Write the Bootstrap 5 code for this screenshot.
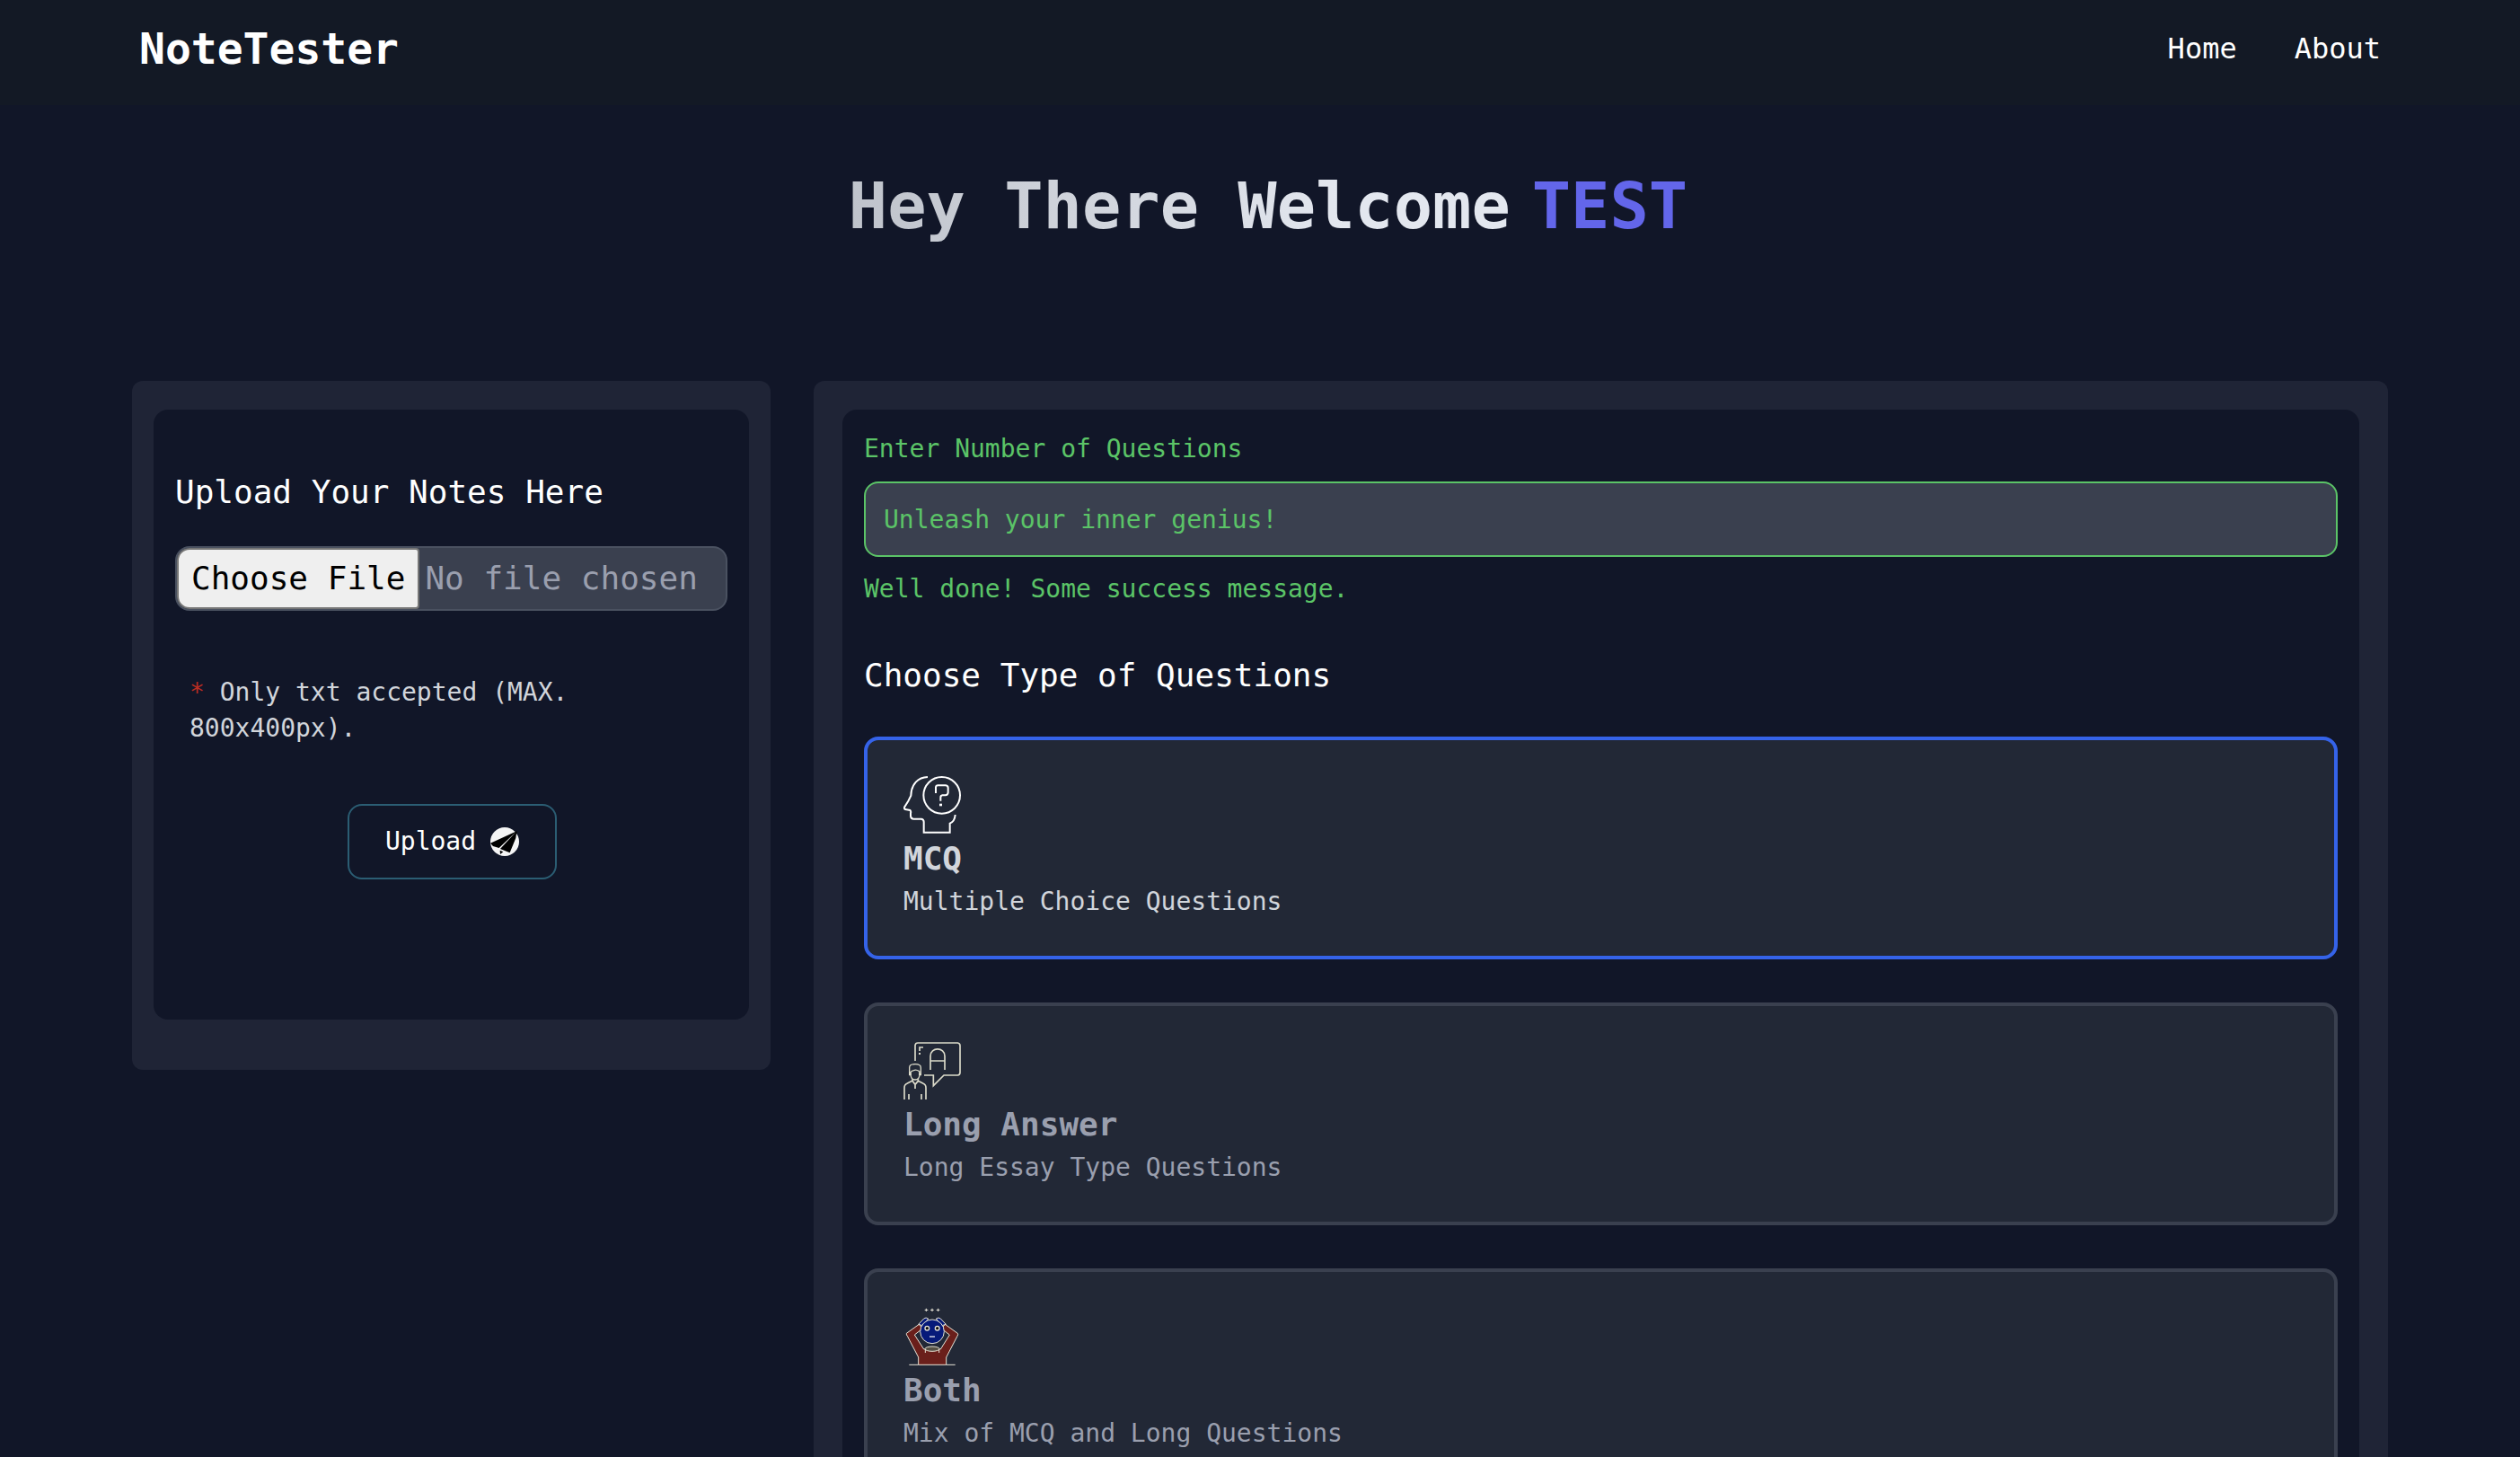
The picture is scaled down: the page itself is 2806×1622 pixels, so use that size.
<!DOCTYPE html>
<html lang="en">
<head>
<meta charset="utf-8">
<meta name="viewport" content="width=device-width, initial-scale=1">
<title>NoteTester</title>
<link rel="stylesheet" href="https://cdn.jsdelivr.net/npm/bootstrap@5.3.0/dist/css/bootstrap.min.css">
<style>
  body { background: #111628; color: #fff; font-family: "DejaVu Sans Mono", "Liberation Mono", monospace; font-size: 28px; line-height: 40px; scrollbar-width: none; }
  .site-header { background: #131925; min-height: 117px; }
  .shell { max-width: 2560px; padding: 0 24px; }
  .site-header .shell { padding: 22px 32px 0; }
  .site-header .navbar-brand { font-size: 48px; line-height: 64px; padding: 0; margin: 0; color: #fff; }
  .site-header .navbar-nav { gap: 64px; }
  .site-header .nav-link { font-size: 32px; line-height: 64px; padding: 0; color: #fff; }
  .hero { padding: 72px 0 155px 18px; }
  .hero h1 { font-size: 72px; line-height: 80px; gap: 24px; }
  .greet { background: linear-gradient(90deg, #bfc3cb, #e3e7ef 75%); -webkit-background-clip: text; background-clip: text; color: transparent; }
  .who { color: #6366ea; }
  .columns { gap: 48px; }
  .side-col { flex: 0 1 711px; }
  .panel { background: #1f2436; border-radius: 12px; }
  .side-col.panel { padding: 32px 24px 56px; }
  .main-col.panel { padding: 32px; }
  .well-box { background: #111628; border-radius: 16px; padding: 24px; }
  .side-col .well-box { padding: 64px 24px 156px; }
  .big-label { display: block; font-size: 36px; line-height: 56px; font-weight: 400; margin: 0; }
  .side-col .big-label { margin-bottom: 32px; }
  .file-field { height: 72px; padding: 0; border: 2px solid #4a5160; border-radius: 16px; background: #3a404f; color: #9a9fae; font-size: 36px; line-height: 42px; overflow: hidden; }
  .file-field:hover, .file-field:focus { background: #3a404f; color: #9a9fae; }
  .file-field::file-selector-button { height: 68px; margin: 0 6px 0 0; padding: 0 14px; border: 2px solid #767676; border-radius: 14px 4px 4px 14px; background: #efefef; color: #000; }
  .file-field:hover:not(:disabled):not([readonly])::file-selector-button { background: #e5e5e5; }
  .file-note { margin: 71px 16px 64px; color: #d1d5db; }
  .star { color: #bb2d22; }
  .upload-row { padding-left: 2px; }
  .upload-btn { border: 2px solid #2b5d73; border-radius: 16px; padding: 20px 40px; color: #fff; font-size: 28px; line-height: 40px; gap: 16px; }
  .upload-btn svg { width: 32px; height: 32px; }
  .ok-text { color: #5bc467; }
  .count-label { display: block; margin-bottom: 16px; }
  .count-field { height: 84px; padding: 0 20px; border: 2px solid #5bc467; border-radius: 16px; background: #3a404f; color: #5bc467; font-size: 28px; line-height: 40px; }
  .count-field:focus { background: #3a404f; color: #5bc467; }
  .count-field::placeholder { color: #5bc467; opacity: 1; }
  .ok-note { margin: 16px 0 48px; }
  .main-col .big-label { margin-bottom: 40px; }
  .choices { gap: 48px; }
  .choice { display: block; border: 4px solid #3a404f; border-radius: 16px; background: #222836; padding: 40px; color: #9a9fae; cursor: pointer; }
  .btn-check:checked + .choice { border-color: #3563e9; color: #d1d5db; }
  .choice svg { display: block; width: 64px; height: 64px; }
  .choice-title { display: block; font-size: 36px; line-height: 56px; font-weight: 700; }
  .choice-text { display: block; }
</style>
</head>
<body>
<header class="site-header">
  <nav class="shell mx-auto d-flex justify-content-between align-items-start" aria-label="Main">
    <a class="navbar-brand fw-bold" href="#">NoteTester</a>
    <div class="navbar-nav flex-row">
      <a class="nav-link" href="#">Home</a>
      <a class="nav-link" href="#">About</a>
    </div>
  </nav>
</header>

<main class="shell mx-auto">
  <div class="hero">
    <h1 class="d-flex flex-wrap justify-content-center fw-bold m-0"><span class="greet">Hey There Welcome</span><span class="who">TEST</span></h1>
  </div>

  <div class="columns d-flex flex-column flex-lg-row align-items-lg-start">
    <section class="side-col panel">
      <form class="well-box">
        <label class="big-label" for="notes">Upload Your Notes Here</label>
        <input class="form-control file-field" type="file" id="notes">
        <p class="file-note"><span class="star">*</span> Only txt accepted (MAX. 800x400px).</p>
        <div class="upload-row d-flex justify-content-center">
          <button type="button" class="upload-btn btn d-inline-flex align-items-center">Upload
            <svg viewBox="78 96 96 96" aria-hidden="true">
              <circle cx="126" cy="144" r="48" fill="#f5f5f5"/>
              <path d="M166 109L78 149L87 159L107 165Z M166 109L111 168L143 181L163 132Z M110 173L121 178L111 186Z" fill="#000"/>
              <path d="M160 113L166 109L167 119Z" fill="#000"/>
            </svg>
          </button>
        </div>
      </form>
    </section>

    <section class="main-col panel flex-grow-1">
      <form class="well-box">
        <label class="count-label ok-text" for="count">Enter Number of Questions</label>
        <input class="form-control count-field" type="text" id="count" placeholder="Unleash your inner genius!">
        <p class="ok-note ok-text">Well done! Some success message.</p>
        <h2 class="big-label" id="kind">Choose Type of Questions</h2>
        <div class="choices d-flex flex-column" role="radiogroup" aria-labelledby="kind">
          <div class="position-relative">
            <input class="btn-check" type="radio" name="kind" id="mcq" checked>
            <label class="choice" for="mcq">
              <svg viewBox="78 72 192 192" fill="none" stroke="#fff" stroke-width="6" aria-hidden="true">
                <path d="M159 75C127 76 104 98 103 137L94 155L81 176Q79 183 88 184L100 186Q104 190 102 195V206Q103 215 112 215H138Q146 217 146 225V260H233V230Q249 224 251 201"/>
                <circle cx="206" cy="136" r="61"/>
                <path d="M186 129V109Q187 103 193 103H219Q227 104 227 111V127Q226 135 218 136H208Q202 137 202 143V155"/>
                <path d="M198 168H207" stroke-width="8"/>
              </svg>
              <span class="choice-title">MCQ</span>
              <span class="choice-text">Multiple Choice Questions</span>
            </label>
          </div>
          <div class="position-relative">
            <input class="btn-check" type="radio" name="kind" id="long">
            <label class="choice" for="long">
              <svg viewBox="78 60 192 192" fill="none" stroke="#dcdbca" stroke-width="5" aria-hidden="true">
                <path d="M117 123V71Q118 63 126 63H259Q267 64 267 72V162Q267 170 259 171H213L178 206V171H147"/>
                <path d="M168 153V107C168 76 216 76 216 107V153M168 123H216M132 90V78H144"/>
                <path d="M129 99H135" stroke-width="6"/>
                <path d="M98 170V145C98 137 107 134 117 134C128 134 136 138 136 146V170H131V158Q120 151 112 155Q104 157 102 161V170Z" stroke-width="4"/>
                <path d="M102 163C101 179 107 186 117 186C127 186 133 178 132 163" stroke-width="4"/>
                <path d="M108 184V190L117 202L127 190V184M117 201V216M81 252V213Q81 202 91 198L107 190M127 190L143 198Q153 202 153 213V252M96 234V252M138 234V252" stroke-width="5"/>
              </svg>
              <span class="choice-title">Long Answer</span>
              <span class="choice-text">Long Essay Type Questions</span>
            </label>
          </div>
          <div class="position-relative">
            <input class="btn-check" type="radio" name="kind" id="both">
            <label class="choice" for="both">
              <svg viewBox="78 78 192 192" fill="none" stroke="#e6e3d6" stroke-width="3" aria-hidden="true">
                <path d="M149 85H160M154 80V90M168 85H179M174 80V90M188 85H199M194 80V90"/>
                <path d="M130 133L88 163Q87 168 91 172L128 243V268H221V243L258 172Q262 167 259 163L217 133L205 147L232 168L202 216H146L115 168L142 147Z" fill="#6a1f1b"/>
                <path d="M128 133L146 114Q153 108 161 114L142 137ZM220 133L202 114Q195 108 187 114L206 137Z" fill="#061a7a"/>
                <circle cx="174" cy="157" r="40" fill="#061a7a"/>
                <ellipse cx="174" cy="215" rx="24" ry="8" fill="#555045"/>
                <path d="M151 216V228M197 216V228"/>
                <path d="M97 268H128M221 268H251"/>
                <circle cx="157" cy="146" r="7" fill="#111" stroke-width="4"/>
                <circle cx="191" cy="146" r="7" fill="#111" stroke-width="4"/>
                <path d="M165 174H183" stroke="#b9bfd8" stroke-width="5"/>
              </svg>
              <span class="choice-title">Both</span>
              <span class="choice-text">Mix of MCQ and Long Questions</span>
            </label>
          </div>
        </div>
      </form>
    </section>
  </div>
</main>
<script src="https://cdn.jsdelivr.net/npm/bootstrap@5.3.0/dist/js/bootstrap.bundle.min.js"></script>
</body>
</html>
